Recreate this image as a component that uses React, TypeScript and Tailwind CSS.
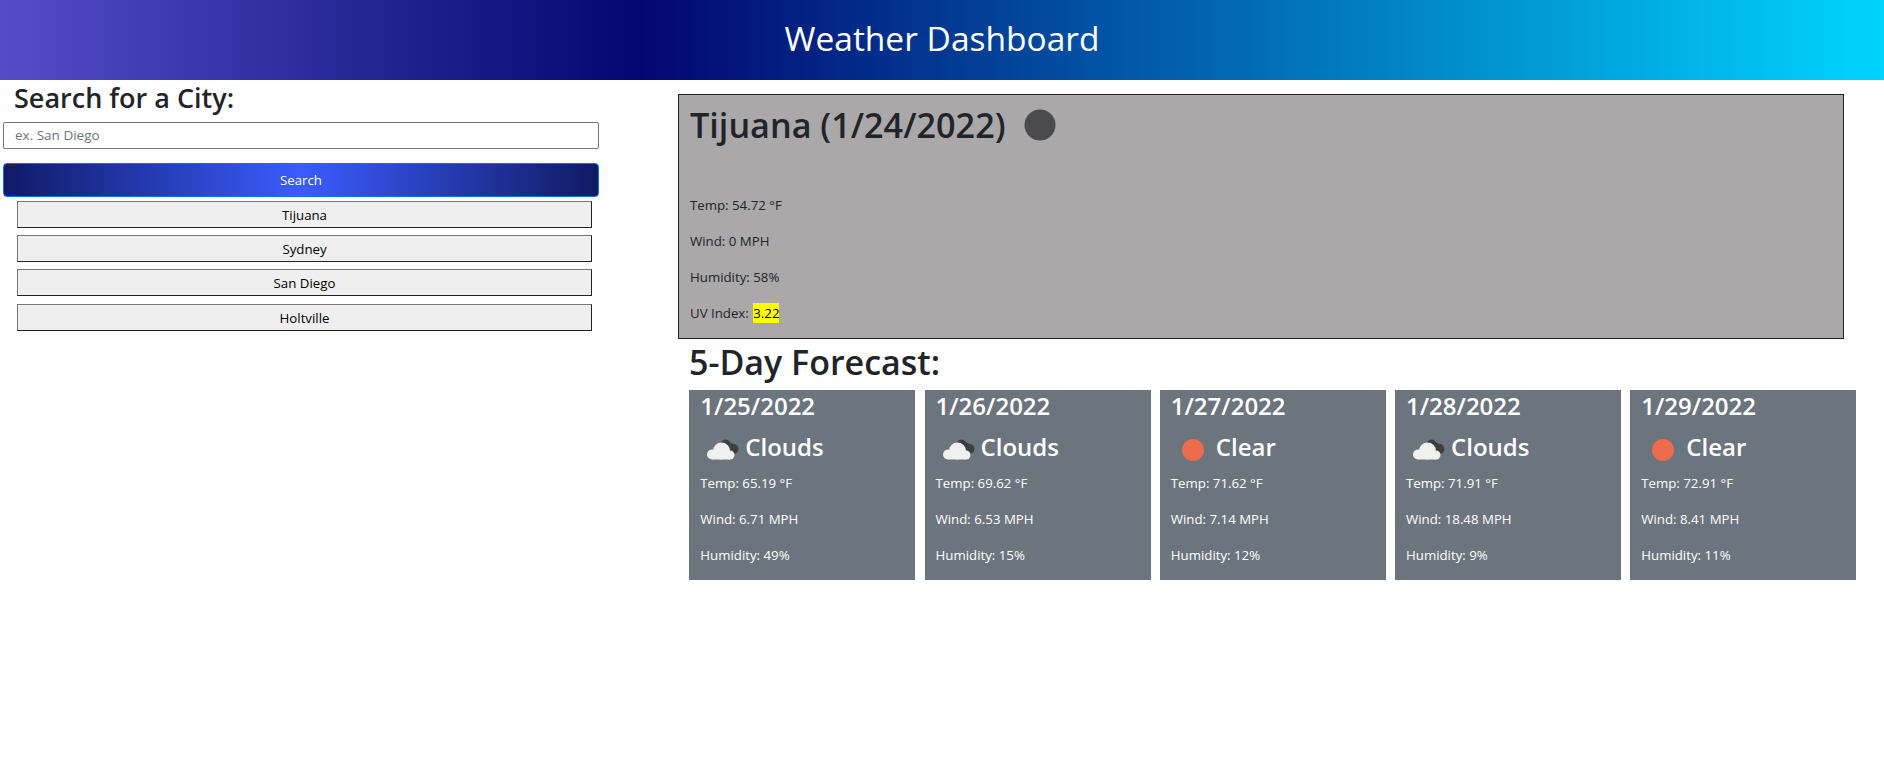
import React from 'react';

const fontStack = "font-['Open_Sans','Noto_Sans',sans-serif]";

const cities = ['Tijuana', 'Sydney', 'San Diego', 'Holtville'];

const forecast = [
  { date: '1/25/2022', kind: 'Clouds', temp: '65.19', wind: '6.71', humidity: '49' },
  { date: '1/26/2022', kind: 'Clouds', temp: '69.62', wind: '6.53', humidity: '15' },
  { date: '1/27/2022', kind: 'Clear', temp: '71.62', wind: '7.14', humidity: '12' },
  { date: '1/28/2022', kind: 'Clouds', temp: '71.91', wind: '18.48', humidity: '9' },
  { date: '1/29/2022', kind: 'Clear', temp: '72.91', wind: '8.41', humidity: '11' },
];

function WeatherIcon({ kind }: { kind: string }) {
  if (kind === 'Clear') {
    return (
      <svg viewBox="0 0 40 40" className="w-10 h-10 shrink-0">
        <circle cx="22" cy="23" r="11" fill="#ee6c4d" />
      </svg>
    );
  }
  return (
    <svg viewBox="0 0 40 40" className="w-10 h-10 shrink-0">
      {/* dark back cloud */}
      <circle cx="25.500" cy="17.500" r="5" fill="#3f3f41" />
      <circle cx="33.500" cy="22" r="5" fill="#3f3f41" />
      <path d="M25 13l11 5l-4 9l-10-6z" fill="#3f3f41" />
      {/* white front cloud */}
      <circle cx="12" cy="27.500" r="5" fill="#f0f0ef" />
      <circle cx="21.500" cy="24" r="8.500" fill="#f0f0ef" />
      <circle cx="30" cy="28" r="4.500" fill="#f0f0ef" />
      <rect x="12" y="27" width="18" height="5.500" fill="#f0f0ef" />
    </svg>
  );
}

export default function App() {
  return (
    <div className={`min-h-screen bg-white text-[#212529] ${fontStack}`}>
      {/* Header */}
      <header className="h-20 flex items-center justify-center pb-1 bg-[linear-gradient(90deg,#534dc8_0%,#03066f_34%,#00d4ff_100%)]">
        <h1 className="text-[33.500px] text-white">Weather Dashboard</h1>
      </header>

      <div className="flex">
        {/* Search column */}
        <aside className="w-[628px] shrink-0 pl-[3px] pr-[29px]">
          <h3 className="pl-[11px] text-[27px] leading-[36px] font-semibold h-[42px]">Search for a City:</h3>
          <input
            placeholder="ex. San Diego"
            className="block w-full h-[27px] px-[11px] pb-px text-[13.500px] bg-white border border-[#767676] rounded-[2px] placeholder:text-[#6c757d]"
          />
          <button className="mt-[14px] block w-full h-[34px] pt-px text-[13.250px] text-white border border-[#0d6efd] rounded-[4px] bg-[linear-gradient(90deg,#0f1a66_0%,#3b5cff_50%,#101a62_100%)]">
            Search
          </button>
          <div className="mt-1 pl-[14px] pr-[7px] flex flex-col gap-[7.200px]">
            {cities.map((city) => (
              <button
                key={city}
                className="h-[27px] pt-[3px] text-[13.250px] text-black bg-[#efefef] border border-t-[#767676] border-l-[#767676] border-r-[#222] border-b-[#222]"
              >
                {city}
              </button>
            ))}
          </div>
        </aside>

        {/* Results column */}
        <main className="flex-1 pl-[50px] pr-[28px]">
          <section className="mt-[14px] h-[245px] w-[1166px] bg-[#aaa8a9] border border-[#222] pl-[11px]">
            <div className="h-[60px] flex items-center gap-[18px]">
              <h2 className="text-[34.200px] font-semibold">Tijuana (1/24/2022)</h2>
              <svg viewBox="0 0 32 32" className="w-8 h-8 shrink-0">
                <circle cx="16" cy="16" r="15.500" fill="#4b4a4c" />
              </svg>
            </div>
            <div className="mt-[40px] text-[13.250px] leading-[21px] flex flex-col gap-[15px]">
              <p>Temp: 54.72 °F</p>
              <p>Wind: 0 MPH</p>
              <p>Humidity: 58%</p>
              <p>
                UV Index:{' '}
                <span className="inline-block w-[26px] ml-px text-center leading-[20px] bg-[#ffff00] text-black">3.22</span>
              </p>
            </div>
          </section>

          <h2 className="pl-[11px] h-[51px] text-[34px] leading-[46px] font-semibold">5-Day Forecast:</h2>

          <div className="pl-[11.300px] flex gap-[9.050px]">
            {forecast.map((day) => (
              <div key={day.date} className="w-[226.200px] h-[190px] bg-[#6c757d] text-white pl-[11px]">
                <div className="text-[24px] leading-[32px] font-semibold">{day.date}</div>
                <div className="mt-[5px] h-10 flex items-center gap-[5px] text-[24px] font-semibold">
                  <WeatherIcon kind={day.kind} />
                  <span>{day.kind}</span>
                </div>
                <div className="mt-[6px] text-[13.250px] leading-[21px] flex flex-col gap-[15px]">
                  <p>Temp: {day.temp} °F</p>
                  <p>Wind: {day.wind} MPH</p>
                  <p>Humidity: {day.humidity}%</p>
                </div>
              </div>
            ))}
          </div>
        </main>
      </div>
    </div>
  );
}
